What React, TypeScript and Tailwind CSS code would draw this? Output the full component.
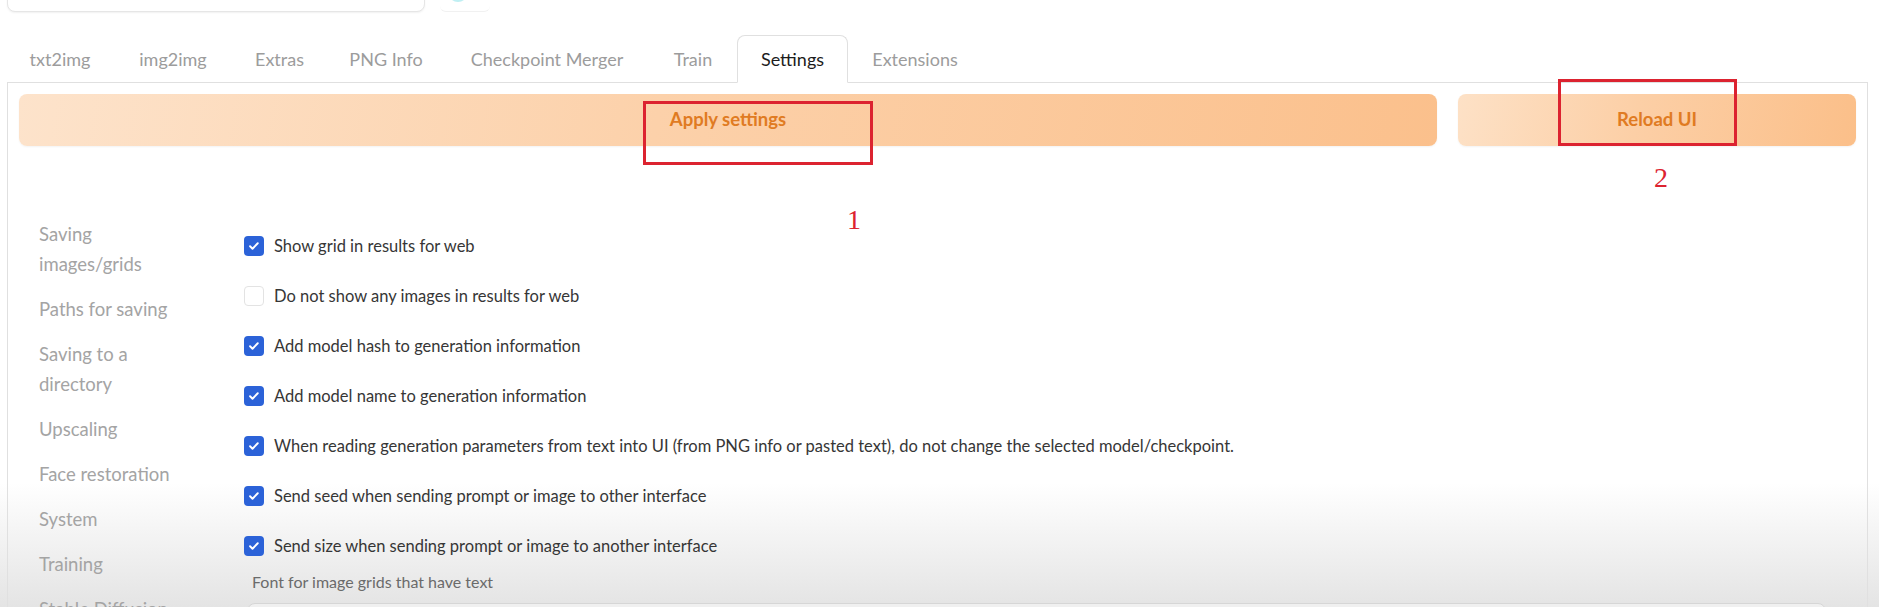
import React from "react";

const tabs = [
  { label: "txt2img", w: "w-[108px]" },
  { label: "img2img", w: "w-[118px]" },
  { label: "Extras", w: "w-[95px]" },
  { label: "PNG Info", w: "w-[118px]" },
  { label: "Checkpoint Merger", w: "w-[204px]" },
  { label: "Train", w: "w-[88px]" },
  { label: "Settings", w: "w-[111px]", active: true },
  { label: "Extensions", w: "w-[134px]" },
];

const sections = [
  "Saving images/grids",
  "Paths for saving",
  "Saving to a directory",
  "Upscaling",
  "Face restoration",
  "System",
  "Training",
  "Stable Diffusion",
];

const options: { text: string; checked: boolean }[] = [
  { text: "Show grid in results for web", checked: true },
  { text: "Do not show any images in results for web", checked: false },
  { text: "Add model hash to generation information", checked: true },
  { text: "Add model name to generation information", checked: true },
  {
    text: "When reading generation parameters from text into UI (from PNG info or pasted text), do not change the selected model/checkpoint.",
    checked: true,
  },
  { text: "Send seed when sending prompt or image to other interface", checked: true },
  { text: "Send size when sending prompt or image to another interface", checked: true },
];

function Checkbox({ checked }: { checked: boolean }) {
  if (checked) {
    return (
      <span className="flex h-[20px] w-[20px] shrink-0 items-center justify-center rounded-[4px] bg-[#2b62d8]">
        <svg viewBox="0 0 16 16" className="h-[14px] w-[14px]" fill="none">
          <path d="M3.5 8.3l2.8 2.8 6-6.2" stroke="#ffffff" strokeWidth="2.2" strokeLinecap="round" strokeLinejoin="round" />
        </svg>
      </span>
    );
  }
  return <span className="h-[20px] w-[20px] shrink-0 rounded-[4px] border border-[#e3e3e3] bg-white" />;
}

export default function App() {
  return (
    <div className="relative h-[607px] w-[1879px] overflow-hidden bg-[linear-gradient(to_bottom,#ffffff_483px,#e4e4e4_607px)] font-['Lato','Noto_Sans',sans-serif]">
      {/* top strip */}
      <div className="flex h-[12px] items-end gap-[15px] pl-[7px]">
        <div className="h-[40px] w-[418px] shrink-0 rounded-lg border border-[#e6e6e6] bg-white shadow-[0_1px_2px_rgba(0,0,0,0.06)]" />
        <div className="relative h-[40px] w-[50px] shrink-0 rounded-md border-b border-[#f1f1f1]">
          <span className="absolute bottom-[9px] left-[8px] h-[20px] w-[20px] rounded-full bg-[#bfeff3]" />
        </div>
      </div>

      {/* tabs */}
      <div className="mt-[23px] flex pl-[6px]">
        {tabs.map((t) => (
          <div
            key={t.label}
            className={
              t.active
                ? `${t.w} relative z-10 flex h-[48px] items-center justify-center rounded-t-lg border border-[#e0e0e0] border-b-white bg-white text-[18px] text-[#1c1c1c]`
                : `${t.w} flex h-[48px] items-center justify-center border border-transparent text-[18px] text-[#9c9c9c]`
            }
          >
            {t.label}
          </div>
        ))}
      </div>

      {/* panel */}
      <div className="-mt-px ml-[7px] h-[530px] w-[1861px] border border-b-0 border-[#e0e0e0] px-[11px] pt-[11px]">
        <div className="flex h-[52px] gap-[21px]">
          <button className="flex flex-1 items-center justify-center rounded-lg bg-[linear-gradient(100deg,#fde3cb_0%,#fcd1aa_45%,#fbc08c_100%)] text-[18.5px] font-bold text-[#e07b22] shadow-[0_1px_2px_rgba(0,0,0,0.05)]">
            Apply settings
          </button>
          <button className="flex w-[398px] shrink-0 items-center justify-center rounded-lg bg-[linear-gradient(100deg,#fde1c6_0%,#fccfa6_45%,#fbbf89_100%)] text-[18.5px] font-bold text-[#e07b22] shadow-[0_1px_2px_rgba(0,0,0,0.05)]">
            Reload UI
          </button>
        </div>

        <div className="flex pt-[73px]">
          <div className="flex w-[225px] shrink-0 flex-col gap-[15px] pl-[20px] pr-[55px] text-[18.5px] leading-[30px] text-[#a4a4a4]">
            {sections.map((s) => (
              <div key={s}>{s}</div>
            ))}
          </div>
          <div className="flex flex-1 flex-col pt-[2px]">
            {options.map((o) => (
              <div key={o.text} className="flex h-[50px] items-center gap-[10px] text-[16.5px] text-[#363636]">
                <Checkbox checked={o.checked} />
                <span>{o.text}</span>
              </div>
            ))}
            <div className="mt-[1px] pl-[8px] text-[16px] leading-[20px] text-[#6b6b6b]">
              Font for image grids that have text
            </div>
            <div className="ml-[3px] mt-[11px] h-[40px] w-[1579px] rounded-lg border border-[#d6d6d6] bg-[#f0f0f0]" />
          </div>
        </div>
      </div>

      {/* annotations */}
      <div className="absolute left-[643px] top-[101px] h-[64px] w-[230px] border-[3px] border-[#dc2330]" />
      <div className="absolute left-[1558px] top-[79px] h-[67px] w-[179px] border-[3px] border-[#dc2330]" />
      <span className="absolute left-[847px] top-[206px] font-['Liberation_Serif',serif] text-[28px] leading-none text-[#dc2330]">
        1
      </span>
      <span className="absolute left-[1654px] top-[164px] font-['Liberation_Serif',serif] text-[28px] leading-none text-[#dc2330]">
        2
      </span>
    </div>
  );
}
